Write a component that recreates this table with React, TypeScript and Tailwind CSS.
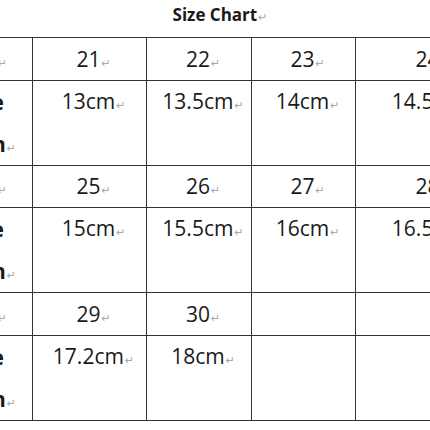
import React from "react";

type Block = {
  sizes: string[];
  lengths: string[];
};

const blocks: Block[] = [
  { sizes: ["21", "22", "23", "24", "25"], lengths: ["13cm", "13.5cm", "14cm", "14.5cm", "15cm"] },
  { sizes: ["25", "26", "27", "28", "29"], lengths: ["15cm", "15.5cm", "16cm", "16.5cm", "17cm"] },
  { sizes: ["29", "30", "", "", ""], lengths: ["17.2cm", "18cm", "", "", ""] },
];

// Word-style paragraph mark
const Mark = () => (
  <span
    className="ml-[1px] text-[11px] leading-none font-normal text-[#a8a8a8]"
    style={{ fontFamily: '"DejaVu Sans", sans-serif' }}
  >
    ↵
  </span>
);

const cell = "border border-[#333333] p-0 overflow-hidden";

export default function App(): React.ReactElement {
  return (
    <div
      className="w-[430px] h-[430px] overflow-hidden bg-white text-[#1a1a1a]"
      style={{ fontFamily: '"Open Sans", "Liberation Sans", sans-serif' }}
    >
      {/* Title */}
      <div className="h-[37px] pt-[3px] pl-[10px] text-center text-[17px] font-bold leading-[23px]">
        Size Chart
        <Mark />
      </div>

      <table className="table-fixed border-collapse ml-[-88px] w-[690px]">
        <colgroup>
          <col className="w-[120px]" />
          <col className="w-[114px]" />
          <col className="w-[105px]" />
          <col className="w-[104px]" />
          <col className="w-[146px]" />
          <col className="w-[101px]" />
        </colgroup>
        <tbody>
          {blocks.map((b, i) => (
            <React.Fragment key={i}>
              <tr className="h-[42.5px]">
                <td className={`${cell} text-right pr-[25px] text-[21px] leading-[28px] align-middle whitespace-nowrap`}>
                  Size
                  <Mark />
                </td>
                {b.sizes.map((s, j) => (
                  <td key={j} className={`${cell} text-center pl-[8px] text-[21px] leading-[28px] align-middle`}>
                    {s && (
                      <>
                        {s}
                        <Mark />
                      </>
                    )}
                  </td>
                ))}
              </tr>
              <tr className="h-[85px]">
                <td className={`${cell} align-top text-[21px] font-bold`}>
                  <div className="flex flex-col items-end pr-[16px] leading-[42px] whitespace-nowrap">
                    <span className="mr-[12px]">Insole</span>
                    <span>
                      Length Pattern
                      <Mark />
                    </span>
                  </div>
                </td>
                {b.lengths.map((l, j) => (
                  <td key={j} className={`${cell} align-top text-center pl-[8px] pt-[6px] text-[21px] leading-[28px]`}>
                    {l && (
                      <>
                        {l}
                        <Mark />
                      </>
                    )}
                  </td>
                ))}
              </tr>
            </React.Fragment>
          ))}
        </tbody>
      </table>
    </div>
  );
}
